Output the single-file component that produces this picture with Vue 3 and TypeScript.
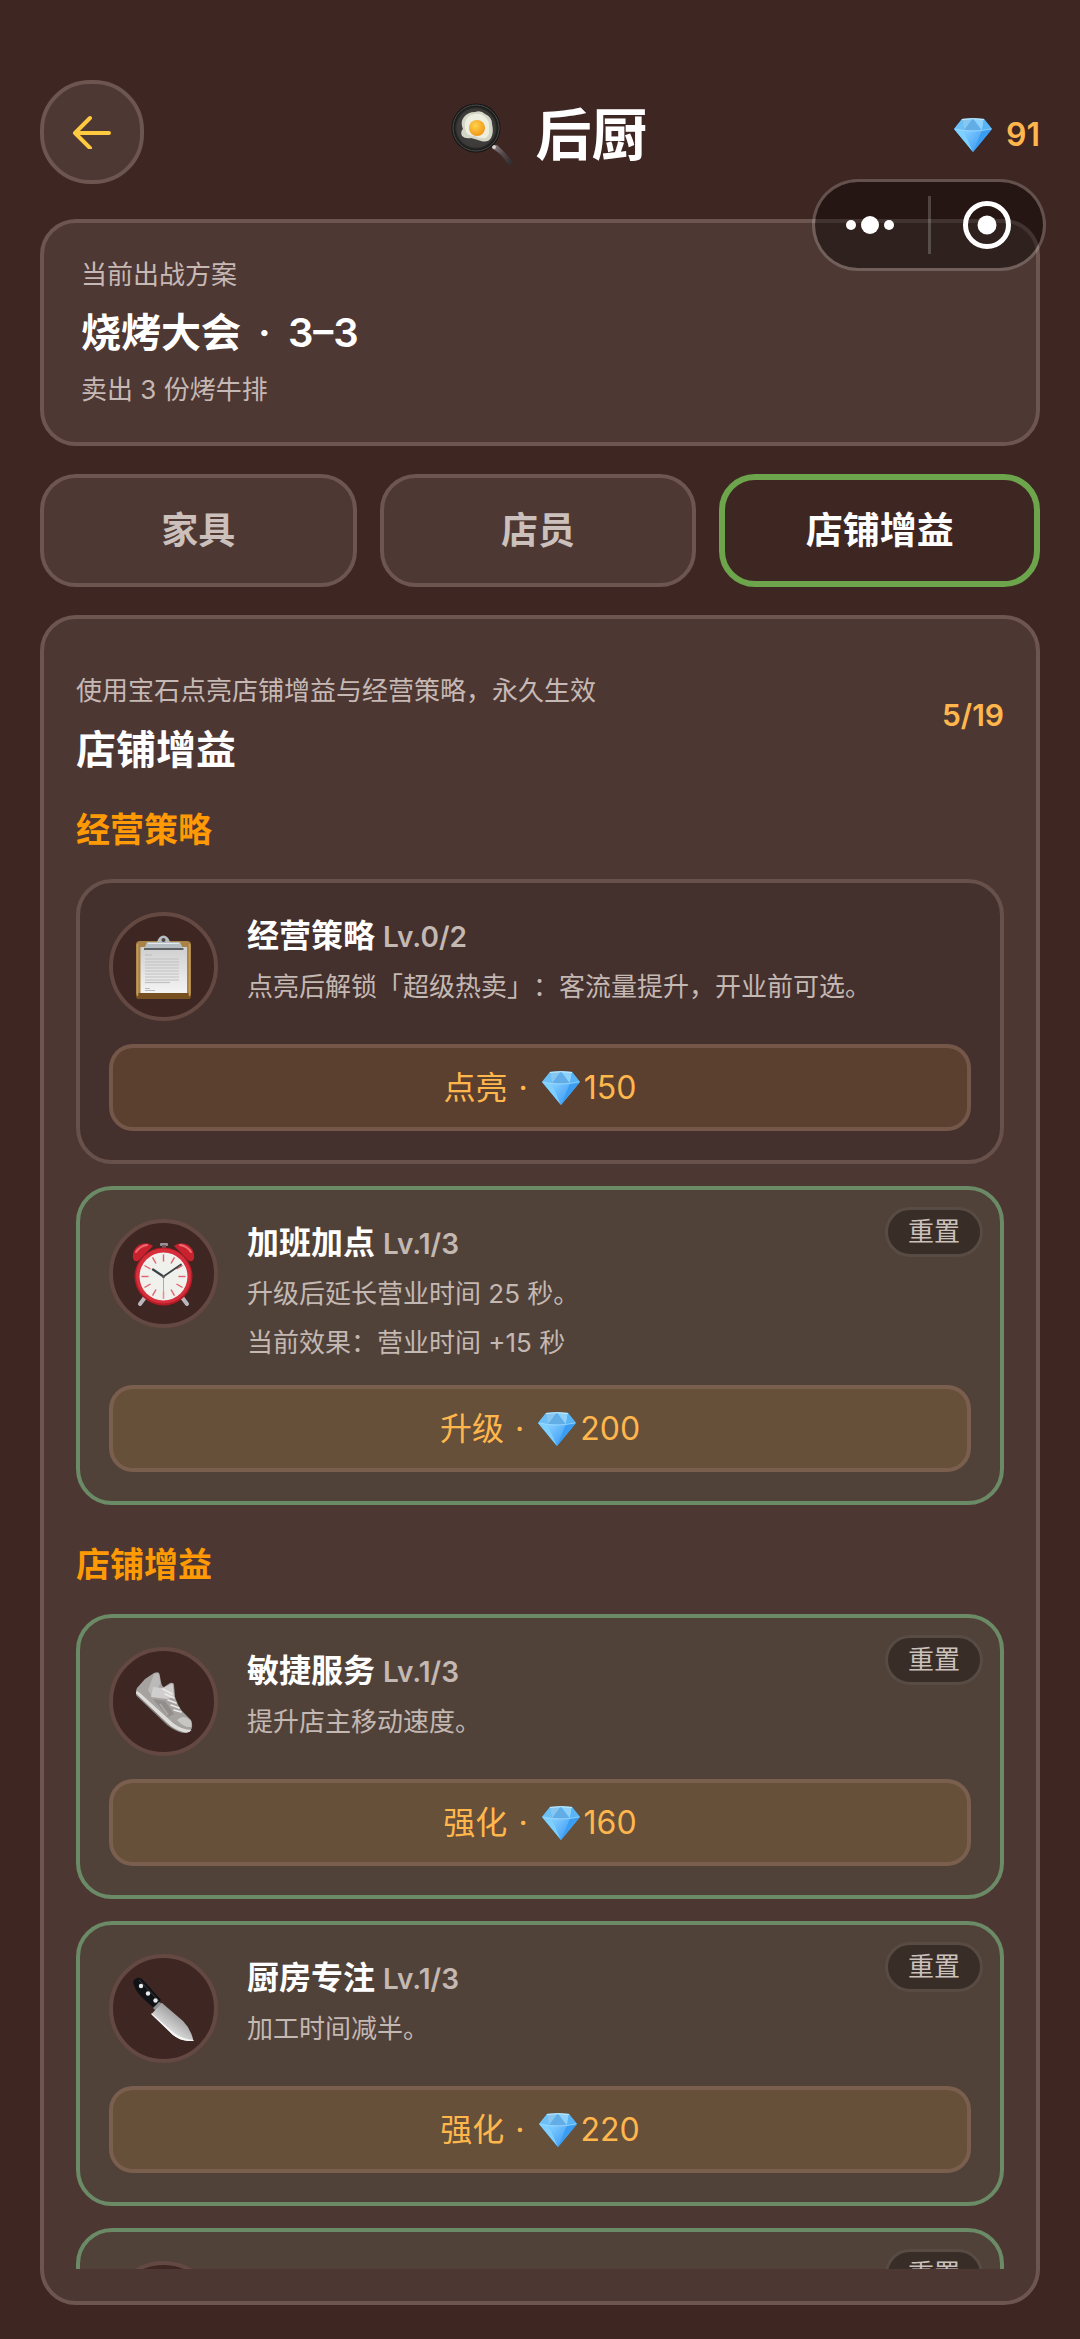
<script setup lang="ts">
import { ref } from 'vue'

type IconName = 'clipboard' | 'clock' | 'shoe' | 'knife' | 'none'

interface Perk {
  id: string
  icon: IconName
  name: string
  level: string
  lines: string[]
  action: string
  cost: number
  active: boolean
}

interface Section {
  title: string
  perks: Perk[]
}

const tabs = ['家具', '店员', '店铺增益']
const currentTab = ref('店铺增益')
const gems = ref(91)

const sections: Section[] = [
  {
    title: '经营策略',
    perks: [
      {
        id: 'strategy',
        icon: 'clipboard',
        name: '经营策略',
        level: 'Lv.0/2',
        lines: ['点亮后解锁「超级热卖」：客流量提升，开业前可选。'],
        action: '点亮',
        cost: 150,
        active: false,
      },
      {
        id: 'overtime',
        icon: 'clock',
        name: '加班加点',
        level: 'Lv.1/3',
        lines: ['升级后延长营业时间 25 秒。', '当前效果：营业时间 +15 秒'],
        action: '升级',
        cost: 200,
        active: true,
      },
    ],
  },
  {
    title: '店铺增益',
    perks: [
      {
        id: 'speed',
        icon: 'shoe',
        name: '敏捷服务',
        level: 'Lv.1/3',
        lines: ['提升店主移动速度。'],
        action: '强化',
        cost: 160,
        active: true,
      },
      {
        id: 'focus',
        icon: 'knife',
        name: '厨房专注',
        level: 'Lv.1/3',
        lines: ['加工时间减半。'],
        action: '强化',
        cost: 220,
        active: true,
      },
      {
        id: 'next',
        icon: 'none',
        name: '',
        level: '',
        lines: [],
        action: '',
        cost: 0,
        active: true,
      },
    ],
  },
]

const ticks = Array.from({ length: 12 }, (_, i) => i * 30)
const paperLines = [24, 27, 30, 33, 36, 39, 42, 45]
</script>

<template>
  <div class="page" lang="zh-CN">
    <!-- Shared artwork -->
    <svg class="defs" width="0" height="0" aria-hidden="true">
      <defs>
        <linearGradient id="gemLow" x1="0" y1="0" x2="1" y2="1">
          <stop offset="0" stop-color="#86d0ff" />
          <stop offset="1" stop-color="#3595f4" />
        </linearGradient>
        <symbol id="gem" viewBox="0 0 38 34">
          <path d="M8 1 Q19 -0.5 30 1 L38 11 L19 34 L0 11Z" fill="#4aaef8" />
          <path d="M8 1 L0 11 L10 12.5Z" fill="#6cc0f5" />
          <path d="M8 1 L19 0.5 L10 12.5Z" fill="#86c6f0" />
          <path d="M19 0.5 L28 12.5 L10 12.5Z" fill="#63ade6" />
          <path d="M19 0.5 L30 1 L28 12.5Z" fill="#8ed2fb" />
          <path d="M30 1 L38 11 L28 12.5Z" fill="#58b4f4" />
          <path d="M0 11 L10 12.5 L19 34Z" fill="#7fd0ff" />
          <path d="M10 12.5 H28 L19 34Z" fill="url(#gemLow)" />
          <path d="M28 12.5 L38 11 L19 34Z" fill="#3a9df2" />
          <path d="M1 11 Q19 15 37 11" fill="none" stroke="#b8e8ff" stroke-width="1" opacity="0.6" />
          <path d="M8 1.4 Q19 0 30 1.4" fill="none" stroke="#c5ecff" stroke-width="1" />
        </symbol>
      </defs>
    </svg>

    <header class="header">
      <button class="back" type="button" aria-label="返回">
        <svg width="40" height="34" viewBox="0 0 40 34" aria-hidden="true">
          <path d="M18 3 L3 18 L18 33 M4 18 H37" fill="none" stroke="#ffca40" stroke-width="4" stroke-linecap="round" stroke-linejoin="round" />
        </svg>
      </button>

      <h1 class="title">
        <svg width="64" height="64" viewBox="0 0 64 64" aria-hidden="true">
          <defs>
            <linearGradient id="panHandle" x1="0" y1="0" x2="1" y2="1">
              <stop offset="0" stop-color="#8d8688" />
              <stop offset="0.45" stop-color="#55494b" />
              <stop offset="1" stop-color="#2a2a2e" />
            </linearGradient>
            <radialGradient id="panBody">
              <stop offset="0" stop-color="#4a4846" />
              <stop offset="0.78" stop-color="#3b3a38" />
              <stop offset="0.86" stop-color="#20201f" />
              <stop offset="1" stop-color="#121312" />
            </radialGradient>
            <radialGradient id="yolk" cx="0.4" cy="0.35" r="0.7">
              <stop offset="0" stop-color="#ffd34d" />
              <stop offset="1" stop-color="#ef9313" />
            </radialGradient>
          </defs>
          <path d="M42 43 L46 42 Q54 49 60 57 Q63 61 61 62 Q58 63 55 59 Q52 52 42 46Z" fill="url(#panHandle)" />
          <circle cx="43" cy="44" r="2" fill="#d8d2d2" />
          <circle cx="25" cy="25" r="24.5" fill="url(#panBody)" />
          <circle cx="25" cy="25" r="23" fill="none" stroke="#4b4d4b" stroke-width="1" />
          <path d="M24 9 Q30 7 34 11 Q41 14 41 21 Q43 29 40 35 Q37 40 30 38 Q24 36 20 35 Q14 36 11 33 Q9 29 12 26 Q9 19 13 14 Q17 9 24 9Z" fill="#d3d6c4" />
          <path d="M24 11 Q30 10 34 14 Q39 18 38 25 Q39 32 35 35 Q29 36 24 33 Q17 33 15 29 Q12 18 17 14 Q20 11 24 11Z" fill="#eeeee0" />
          <circle cx="26" cy="25" r="8" fill="url(#yolk)" />
        </svg>
        <span>后厨</span>
      </h1>

      <div class="balance">
        <svg class="gem" width="38" height="34" aria-hidden="true"><use href="#gem" /></svg>
        <span>{{ gems }}</span>
      </div>
    </header>

    <div class="capsule">
      <button class="capsule-btn" type="button" aria-label="更多">
        <svg width="50" height="20" viewBox="0 0 50 20" aria-hidden="true">
          <g fill="#fff">
            <circle cx="5" cy="10" r="5" />
            <circle cx="24" cy="10" r="9" />
            <circle cx="43" cy="10" r="5" />
          </g>
        </svg>
      </button>
      <span class="capsule-line"></span>
      <button class="capsule-btn" type="button" aria-label="关闭">
        <svg width="50" height="50" viewBox="0 0 50 50" aria-hidden="true">
          <circle cx="25" cy="25" r="21.5" fill="none" stroke="#fff" stroke-width="5" />
          <circle cx="25" cy="25" r="9.5" fill="#fff" />
        </svg>
      </button>
    </div>

    <section class="plan">
      <p class="note">当前出战方案</p>
      <h2 class="heading">烧烤大会 <span class="plan-dot">·</span> 3–3</h2>
      <p class="note">卖出 3 份烤牛排</p>
    </section>

    <nav class="tabs">
      <button
        v-for="tab in tabs"
        :key="tab"
        type="button"
        class="tab"
        :class="{ 'tab-active': tab === currentTab }"
        @click="currentTab = tab"
      >
        {{ tab }}
      </button>
    </nav>

    <main class="panel">
      <div class="scroller">
        <div class="panel-head">
          <div class="panel-intro">
            <p class="note">使用宝石点亮店铺增益与经营策略，永久生效</p>
            <h2 class="heading">店铺增益</h2>
          </div>
          <span class="progress">5/19</span>
        </div>

        <section v-for="section in sections" :key="section.title" class="group">
          <h3 class="group-title">{{ section.title }}</h3>
          <div class="cards">
            <article v-for="perk in section.perks" :key="perk.id" class="card" :class="{ 'card-active': perk.active }">
              <div class="card-top">
                <div class="icon">
                  <svg v-if="perk.icon === 'clipboard'" width="64" height="64" viewBox="0 0 64 64" aria-hidden="true">
                    <defs>
                      <linearGradient id="paper" x1="0" y1="0" x2="0" y2="1">
                        <stop offset="0" stop-color="#cfcfd0" />
                        <stop offset="1" stop-color="#f4f4f4" />
                      </linearGradient>
                    </defs>
                    <rect x="4" y="6" width="55" height="58" rx="4" fill="#a98346" />
                    <rect x="4" y="58" width="55" height="6" rx="3" fill="#76511f" />
                    <path d="M5.5 9 V61 M57.5 9 V61" stroke="#c19c5d" stroke-width="1.5" />
                    <rect x="8.5" y="12" width="46.5" height="46" fill="url(#paper)" />
                    <path d="M13 20 H20 M13 53.5 H18 M13 55.5 H23" stroke="#b8babb" stroke-width="1" />
                    <path v-for="y in paperLines" :key="y" :d="`M13 ${y} H47`" stroke="#bfc0c1" stroke-width="1.2" />
                    <path d="M13 47.5 H38" stroke="#bfc0c1" stroke-width="1.2" />
                    <path d="M15 7 H25 Q27 0.5 31.5 0.5 Q36 0.5 38 7 H48 L51 14 H12Z" fill="#b7bec4" />
                    <path d="M12 13 H51.5 V15 H12Z" fill="#5f6265" />
                    <path d="M16 8.5 H47" stroke="#e2e7ea" stroke-width="1" />
                    <circle cx="31.5" cy="5" r="2" fill="#4f4740" />
                  </svg>

                  <svg v-else-if="perk.icon === 'clock'" width="64" height="64" viewBox="0 0 64 64" aria-hidden="true">
                    <path d="M14 54 L8 62 M49 54 L55 62" stroke="#b9b5bb" stroke-width="4" stroke-linecap="round" />
                    <rect x="28" y="1" width="8" height="3" rx="1" fill="#9b9298" />
                    <rect x="30" y="3" width="4" height="5" fill="#6d5a5e" />
                    <path d="M1 16 Q0 8 7 3 Q15 -1 21 4 L6 19 Q2 20 1 16Z" fill="#c9222f" />
                    <path d="M62 16 Q63 8 56 3 Q48 -1 42 4 L57 19 Q61 20 62 16Z" fill="#c9222f" />
                    <path d="M4 10 Q8 4 15 3 M59 10 Q55 4 48 3" fill="none" stroke="#f06a70" stroke-width="2" stroke-linecap="round" />
                    <circle cx="31.5" cy="34.5" r="29" fill="#b51a26" />
                    <circle cx="31.5" cy="34" r="27.5" fill="#d62f3b" />
                    <circle cx="31.5" cy="34.5" r="24" fill="#f0f0ec" />
                    <path
                      v-for="deg in ticks"
                      :key="deg"
                      d="M31.5 12.5 V19.5"
                      :transform="`rotate(${deg} 31.5 34.5)`"
                      stroke="#e0616b"
                      stroke-width="1.4"
                    />
                    <path d="M31.5 34.5 L21 27.5" stroke="#3c4345" stroke-width="2.2" stroke-linecap="round" />
                    <path d="M31.5 34.5 L49 22.5" stroke="#3c4345" stroke-width="1.8" stroke-linecap="round" />
                    <path d="M31.5 33 V57" stroke="#b9a98c" stroke-width="1" />
                    <circle cx="31.5" cy="34.5" r="1.6" fill="#5b5b58" />
                  </svg>

                  <svg v-else-if="perk.icon === 'shoe'" width="64" height="64" viewBox="0 0 64 64" aria-hidden="true">
                    <path d="M13 9 L22 3 Q27 1 27.5 4 L29 12 Q30 17 32 17 L38 13 Q42 12 42 15 L43 27 Q46 36 50 41 L59 50 Q61 55 59.5 59 Q57 64 50 62 Q42 60 36 54 L5 25 Q3 22 5 18Z" fill="#a5a2a0" />
                    <path d="M22 4 Q27 2 27 5 L28.5 13 L21 28 L16 20Z" fill="#bcbab8" />
                    <path d="M21 17 L31 18 L39 14 Q41 13 41 16 L42 27 L35 29 L19 27Z" fill="#cfcecc" />
                    <path d="M31 19 L40 24 M33 24 L42 28 M36 30 L44 33 M39 35 L47 38 M42 40 L49 42" stroke="#eceae8" stroke-width="1.6" stroke-linecap="round" />
                    <path d="M21 29 L33 31 L42 44 L36 47Z" fill="#928e8c" />
                    <path d="M28 34 L36 45" stroke="#aba8a5" stroke-width="2" />
                    <path d="M45 50 Q50 45 55 48 L59 51 Q60 54 59 57 Q52 58 45 50Z" fill="#c8c6c3" />
                    <path d="M5 21 Q3 23 5 25 L36 54 Q42 60 50 62 Q57 64 59.5 60 Q50 60 41 53 L8 23Z" fill="#dddcd9" />
                    <path d="M4.5 25 L36 55 Q44 61 51 62.5" fill="none" stroke="#8b8785" stroke-width="1.2" />
                  </svg>

                  <svg v-else-if="perk.icon === 'knife'" width="64" height="64" viewBox="0 0 64 64" aria-hidden="true">
                    <defs>
                      <linearGradient id="blade" x1="0.7" y1="0.2" x2="0.3" y2="0.7">
                        <stop offset="0" stop-color="#8f9190" />
                        <stop offset="0.5" stop-color="#b8b9b8" />
                        <stop offset="1" stop-color="#e2e2e2" />
                      </linearGradient>
                    </defs>
                    <path d="M1.5 7 Q0 3 5 1 Q9 0 12 4 L29 23 L22 31 L16 26 Q7 18 4 13Z" fill="#101216" />
                    <path d="M7 3 L27 24" stroke="#3a3d42" stroke-width="1" />
                    <path d="M27 25 L31 27 L24 34 L21 31Z" fill="#8d8d8f" />
                    <path d="M30 26 L51 44 Q59 52 61.5 64 Q50 65 41 58 L19.5 37Z" fill="url(#blade)" />
                    <path d="M19.5 36 L42 56 Q50 62 61.5 63 L61.5 64 Q50 65 41 58 L19.5 37.5Z" fill="#f6f6f6" />
                    <g fill="#e9eaec">
                      <circle cx="9" cy="9" r="2.2" />
                      <circle cx="16" cy="16.5" r="2.2" />
                      <circle cx="23.5" cy="23.5" r="2.2" />
                    </g>
                  </svg>
                </div>

                <div class="info">
                  <h4 class="name">{{ perk.name }} <span class="level">{{ perk.level }}</span></h4>
                  <div class="lines">
                    <p v-for="line in perk.lines" :key="line" class="desc">{{ line }}</p>
                  </div>
                </div>
              </div>

              <button v-if="perk.active" class="reset" type="button">重置</button>

              <button class="action" type="button">
                <span v-if="perk.action">{{ perk.action }} <span class="action-dot">·</span></span>
                <svg class="gem" width="38" height="34" aria-hidden="true"><use href="#gem" /></svg>
                <span v-if="perk.cost" class="cost">{{ perk.cost }}</span>
              </button>
            </article>
          </div>
        </section>
      </div>
    </main>
  </div>
</template>

<style>
html,
body {
  background: #3e2723;
}
</style>

<style scoped>
.page {
  box-sizing: border-box;
  position: relative;
  display: flex;
  flex-direction: column;
  height: 100vh;
  padding: 80px 40px 34px;
  background: #3e2622;
  color: #fff;
  font-family: Inter, "Noto Sans CJK SC", sans-serif;
  font-size: 26px;
  font-optical-sizing: none;
  text-spacing-trim: space-all;
}

.page * {
  box-sizing: border-box;
}

h1,
h2,
h3,
h4,
p {
  margin: 0;
}

button {
  padding: 0;
  font-family: inherit;
  cursor: pointer;
}

svg {
  display: block;
  flex: none;
}

.defs {
  position: absolute;
}

.header {
  display: flex;
  flex: none;
  align-items: center;
  justify-content: space-between;
  height: 104px;
  margin-bottom: 35px;
}

.back {
  display: flex;
  align-items: center;
  justify-content: center;
  width: 104px;
  height: 104px;
  border: 4px solid #6d5550;
  border-radius: 50px;
  background: #4e3833;
}

.title {
  display: flex;
  align-items: center;
  gap: 21px;
  padding-top: 5px;
  font-size: 56px;
  font-weight: 600;
  line-height: 80px;
}

.balance {
  display: flex;
  align-items: center;
  gap: 14px;
  padding-top: 6px;
  color: #ffb74d;
  font-size: 32px;
  font-weight: 600;
  line-height: 40px;
}

/* Host app menu floating above the page */
.capsule {
  position: absolute;
  z-index: 2;
  top: 179px;
  right: 34px;
  display: flex;
  align-items: center;
  width: 234px;
  height: 92px;
  border: 3px solid rgba(255, 255, 255, 0.2);
  border-radius: 46px;
  background: rgba(0, 0, 0, 0.4);
  background-clip: padding-box;
}

.capsule-btn {
  display: flex;
  flex: 1;
  align-items: center;
  justify-content: center;
  height: 100%;
  border: 0;
  background: none;
}

.capsule-line {
  width: 3px;
  height: 58px;
  background: rgba(255, 255, 255, 0.2);
}

.plan {
  display: flex;
  flex: none;
  flex-direction: column;
  gap: 11px;
  padding: 34px 37px;
  border: 4px solid #6d5550;
  border-radius: 36px;
  background: #4e3833;
}

.plan-dot {
  margin: 0 7px;
}

.note {
  color: #c6b9b5;
  font-size: 26px;
  line-height: 36px;
}

.heading {
  font-size: 40px;
  font-weight: 600;
  line-height: 57px;
}

.tabs {
  display: flex;
  flex: none;
  gap: 23px;
  margin: 28px 0;
}

.tab {
  flex: 1;
  height: 113px;
  border: 4px solid #6d5550;
  border-radius: 36px;
  background: #4e3833;
  color: #cbc0bc;
  font-size: 37px;
  font-weight: 600;
  line-height: 48px;
}

.tab-active {
  border: 6px solid #6ca54b;
  background: #3e2622;
  color: #fff;
}

.panel {
  display: flex;
  flex: 1;
  flex-direction: column;
  min-height: 0;
  padding: 32px;
  border: 4px solid #6d5550;
  border-radius: 36px;
  background: #4d3733;
}

.scroller {
  flex: 1;
  min-height: 0;
  overflow-y: auto;
  scrollbar-width: none;
}

.panel-head {
  display: flex;
  align-items: center;
  justify-content: space-between;
}

.panel-intro {
  display: flex;
  flex-direction: column;
  gap: 12px;
  padding-top: 22px;
}

.progress {
  color: #ffb74d;
  font-size: 30px;
  font-weight: 600;
}

.group {
  padding-top: 28px;
}

.group + .group {
  padding-top: 36px;
}

.group-title {
  margin-bottom: 25px;
  color: #ff9a05;
  font-size: 34px;
  font-weight: 600;
  line-height: 48px;
}

.cards {
  display: flex;
  flex-direction: column;
  gap: 22px;
}

.card {
  position: relative;
  display: flex;
  flex-direction: column;
  gap: 23px;
  padding: 29px;
  border: 4px solid #68514b;
  border-radius: 36px;
  background: #44302d;
}

.card-active {
  border-color: #6b8a66;
  background: #514239;
}

.card-top {
  display: flex;
  align-items: flex-start;
  gap: 29px;
}

.icon {
  display: flex;
  flex: none;
  align-items: center;
  justify-content: center;
  width: 109px;
  height: 109px;
  border: 4px solid #644842;
  border-radius: 50%;
  background: #3e2622;
}

.info {
  display: flex;
  flex: 1;
  flex-direction: column;
  gap: 8px;
  min-width: 0;
}

.name {
  font-size: 32px;
  font-weight: 600;
  line-height: 47px;
}

.level {
  color: #c4b8b3;
  font-size: 28px;
  line-height: 28px;
}

.lines {
  display: flex;
  flex-direction: column;
  gap: 10px;
}

.desc {
  color: #c4b8b3;
  font-size: 26px;
  line-height: 39px;
}

.reset {
  position: absolute;
  top: 17px;
  right: 17px;
  width: 98px;
  height: 50px;
  border: 3px solid #574b44;
  border-radius: 25px;
  background: #392d28;
  color: #cbc1bc;
  font-size: 26px;
  line-height: 36px;
}

.action {
  display: flex;
  align-items: center;
  justify-content: center;
  height: 87px;
  border: 4px solid rgba(141, 110, 99, 0.5);
  border-radius: 24px;
  background: rgba(255, 180, 60, 0.13);
  color: #ffb74d;
  font-size: 32px;
  line-height: 40px;
}

.action-dot {
  margin: 0 2px;
}

.action .gem {
  margin-left: 12px;
}

.cost {
  margin-left: 4px;
}
</style>
